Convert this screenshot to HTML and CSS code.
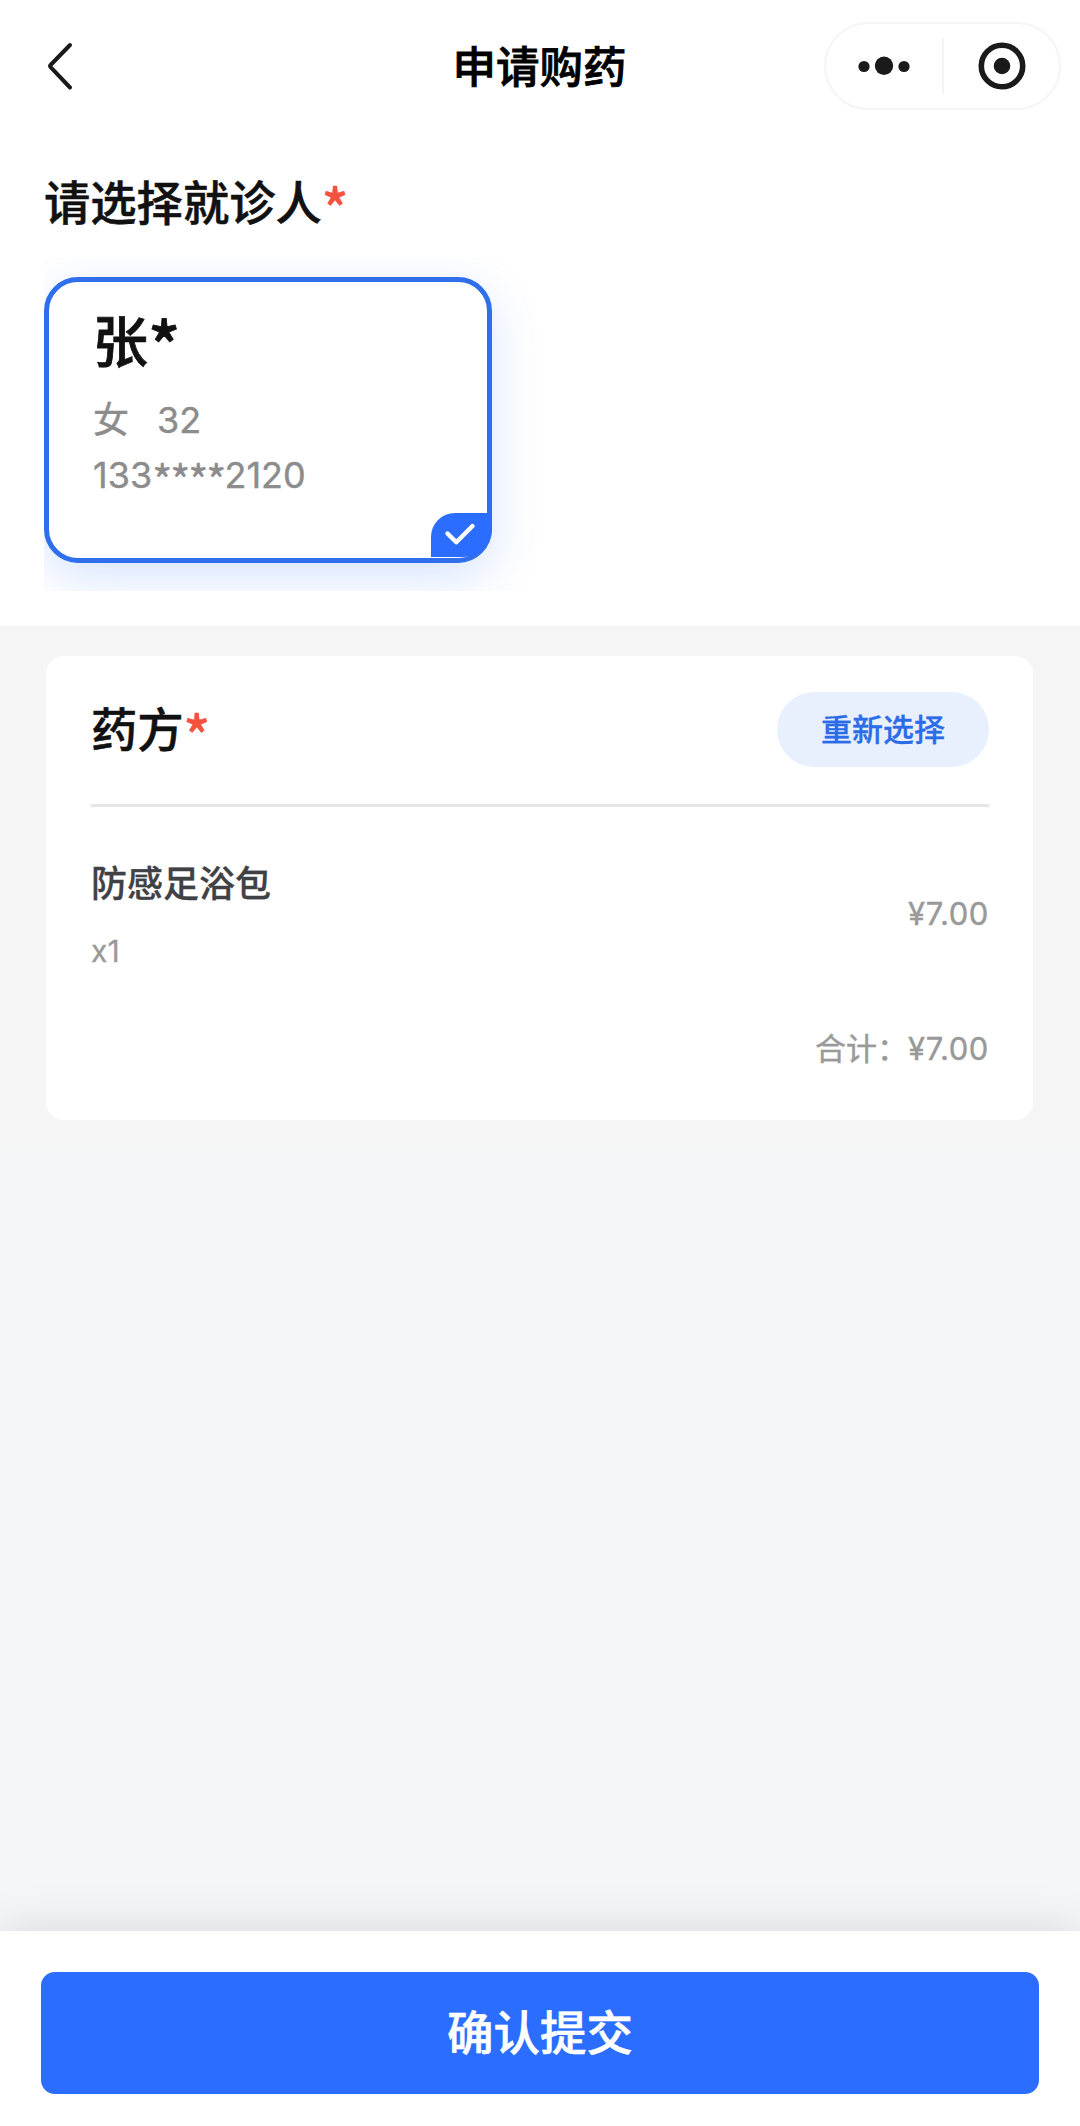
FILE: index.html
```html
<!DOCTYPE html>
<html lang="zh-CN">
<head>
<meta charset="utf-8">
<title>申请购药</title>
<link rel="stylesheet" href="styles.css">
</head>
<body>
<div class="page">
  <header class="navbar">
    <svg class="back" width="32" height="52" viewBox="0 0 32 52" fill="none" stroke="#1a1a1a" stroke-width="4" stroke-linecap="round" stroke-linejoin="round"><path d="M27 5 L7.6 25 Q6.6 26 7.6 27.2 L27 47.5"/></svg>
    <h1 class="title">申请购药</h1>
    <div class="capsule">
      <svg class="dots" width="56" height="20" viewBox="0 0 56 20" fill="#1a1a1a"><circle cx="8" cy="10.5" r="5.6"/><circle cx="28" cy="9.7" r="9.2"/><circle cx="48" cy="10.5" r="5.6"/></svg>
      <span class="split"></span>
      <svg class="target" width="48" height="48" viewBox="0 0 48 48"><circle cx="24" cy="24" r="20.7" fill="none" stroke="#1a1a1a" stroke-width="5.6"/><circle cx="24" cy="24" r="8.3" fill="#1a1a1a"/></svg>
    </div>
  </header>

  <section class="patients">
    <h2 class="heading">请选择就诊人<span class="star">*</span></h2>
    <div class="card-list">
      <div class="patient">
        <div class="name">张<span class="mask">*</span></div>
        <div class="info"><span>女</span><span>32</span></div>
        <div class="phone">133<span class="hidden-digits">****</span>2120</div>
        <span class="badge"><svg width="61" height="44" viewBox="0 0 61 44" fill="none" stroke="#fff" stroke-width="4.4" stroke-linecap="round" stroke-linejoin="round"><path d="M16.5 20.5 L25.3 29.3 L41.5 13"/></svg></span>
      </div>
    </div>
  </section>

  <main class="content">
    <section class="panel">
      <div class="panel-head">
        <h2 class="heading">药方<span class="star">*</span></h2>
        <button class="reselect">重新选择</button>
      </div>
      <div class="item">
        <div class="item-text">
          <div class="item-name">防感足浴包</div>
          <div class="qty">x1</div>
        </div>
        <div class="price">¥7.00</div>
      </div>
      <div class="total"><span class="total-label">合计：</span><span class="price">¥7.00</span></div>
    </section>
  </main>

  <footer class="footer">
    <button class="submit">确认提交</button>
  </footer>
</div>
</body>
</html>
```
FILE: styles.css
```css
* {
  box-sizing: border-box;
  margin: 0;
  padding: 0;
}

body {
  font-family: Inter, "Noto Sans CJK SC", sans-serif;
  color: #111;
}

button {
  border: 0;
  font-family: inherit;
}

.page {
  display: flex;
  flex-direction: column;
  width: 1080px;
  height: 2126px;
  overflow: hidden;
  background: #fff;
}

.navbar {
  display: grid;
  grid-template-columns: 1fr auto 1fr;
  align-items: center;
  height: 132px;
  padding: 0 19px 0 43px;
}

.back {
  display: block;
}

.title {
  margin-left: -25px;
  padding-top: 2px;
  font-size: 43.5px;
  line-height: 60px;
  font-weight: 500;
  color: #000;
  -webkit-text-stroke: 0.8px currentColor;
}

.capsule {
  display: flex;
  align-items: center;
  justify-self: end;
  width: 237px;
  height: 88px;
  padding-left: 30px;
  border: 2px solid #f5f5f5;
  border-radius: 44px;
}

.split {
  width: 2px;
  height: 56px;
  margin: 0 34px 0 30px;
  background: #f3f3f3;
}

.patients {
  height: 494px;
  padding-top: 39px;
}

.heading {
  height: 64px;
  font-size: 46.3px;
  line-height: 64px;
  font-weight: 500;
  color: #111;
  -webkit-text-stroke: 0.5px currentColor;
}

.patients .heading {
  padding-left: 44px;
}

.star,
.mask,
.hidden-digits {
  font-family: "Noto Sans CJK SC", sans-serif;
  line-height: 0;
}

.star {
  color: #f5513f;
  font-size: 55px;
  vertical-align: -10px;
}

.card-list {
  height: 333px;
  margin: 23px 0 0 44px;
  padding-top: 19px;
  overflow: hidden;
}

.patient {
  position: relative;
  width: 448px;
  height: 286px;
  padding: 26px 0 0 44px;
  border: 5px solid #2f6fec;
  border-radius: 34px;
  box-shadow: 0 15px 50px rgba(43, 110, 255, 0.19);
  background: #fff;
}

.name {
  height: 69px;
  font-size: 55px;
  line-height: 69px;
  font-weight: 500;
  -webkit-text-stroke: 0.8px currentColor;
}

.mask {
  font-size: 67px;
  vertical-align: -10px;
}

.info,
.phone {
  height: 55px;
  font-size: 36px;
  line-height: 55px;
  color: #8c8c8c;
  -webkit-text-stroke: 0.4px currentColor;
}

.info {
  display: flex;
  gap: 28px;
  margin-top: 16px;
}

.hidden-digits {
  font-size: 43px;
  letter-spacing: -2px;
  vertical-align: -9px;
}

.badge {
  position: absolute;
  right: -5px;
  bottom: 1px;
  width: 61px;
  height: 44px;
  border-radius: 24px 0 29px 0;
  background: #2b6eff;
}

.badge svg {
  display: block;
}

.content {
  flex: 1;
  padding: 30px 47px 0 46px;
  background: linear-gradient(#f5f5f5 510px, #f4f6f8 560px);
}

.panel {
  height: 464px;
  padding: 0 44px 0 45px;
  border-radius: 18px;
  background: #fff;
}

.panel-head {
  display: flex;
  align-items: center;
  justify-content: space-between;
  height: 151px;
  border-bottom: 3px solid #e6e6e6;
}

.reselect {
  width: 212px;
  height: 75px;
  margin-bottom: 2px;
  padding-bottom: 4px;
  border-radius: 38px;
  background: #e8f0fe;
  color: #2b6ce9;
  font-size: 31px;
  font-weight: 500;
  -webkit-text-stroke: 0.3px currentColor;
}

.item {
  display: flex;
  align-items: center;
  justify-content: space-between;
  height: 213px;
}

.item-name {
  font-size: 36px;
  line-height: 52px;
  font-weight: 500;
  color: #3f4144;
  -webkit-text-stroke: 0.3px currentColor;
}

.qty {
  margin-top: 22px;
  font-size: 30px;
  line-height: 38px;
  color: #999;
  -webkit-text-stroke: 0.3px currentColor;
}

.price {
  font-size: 31px;
  letter-spacing: 0.6px;
  color: #999;
  -webkit-text-stroke: 0.4px currentColor;
}

.total {
  display: flex;
  align-items: center;
  justify-content: flex-end;
  height: 58px;
  font-size: 31px;
  color: #999;
}

.total .price {
  padding-bottom: 2px;
}

.total-label {
  padding-bottom: 5px;
  -webkit-text-stroke: 0.4px currentColor;
}

.footer {
  position: relative;
  height: 195px;
  padding: 41px 41px 0;
  background: #fff;
  box-shadow: 0 0 46px rgba(0, 0, 0, 0.13);
}

.submit {
  display: block;
  width: 998px;
  height: 122px;
  padding-bottom: 8px;
  border-radius: 14px;
  background: #2b6eff;
  color: #fff;
  font-size: 46.5px;
  font-weight: 500;
  -webkit-text-stroke: 0.6px currentColor;
}
```
